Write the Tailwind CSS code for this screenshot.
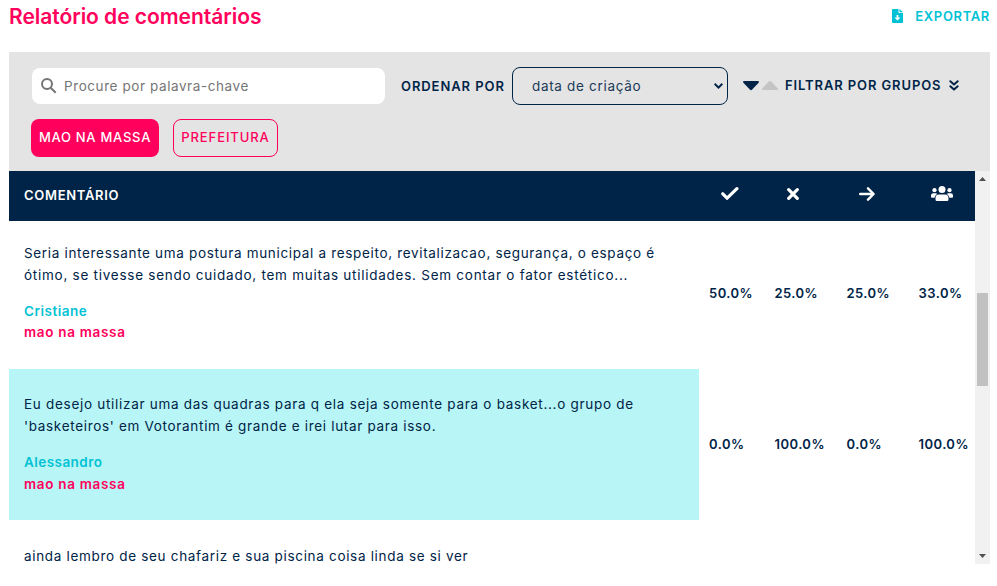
<!DOCTYPE html>
<html lang="pt-BR">
<head>
<meta charset="utf-8">
<title>Relatório de comentários</title>
<script src="https://cdn.jsdelivr.net/npm/@tailwindcss/browser@4"></script>
</head>
<body class="h-[586px] overflow-hidden bg-white pl-[9px] pr-[7px] font-['Inter','Liberation_Sans',sans-serif] text-[#002447]">
<header class="flex h-[52px] items-start justify-between">
  <h1 class="pt-[2px] text-[21px] leading-[30px] font-semibold tracking-[-0.04px] whitespace-nowrap text-[#ff005c]">Relatório de comentários</h1>
  <a class="flex items-center gap-[12px] pt-[5px] text-[13px] leading-[22px] font-semibold tracking-[0.65px] text-[#00c2d4]">
    <svg class="h-[14px] w-[11px]" viewBox="0 0 11 14" fill="currentColor"><path fill-rule="evenodd" d="M1 0h5.5v4H11v9.200a.8.8 0 0 1-.8.8H.8a.8.8 0 0 1-.8-.8V.8A.8.800 0 0 1 .8 0zM4.600 6v2.500H2.500l3 3 3-3H6.400V6z"/><path d="M7.500 0 11 3.200H7.500z"/></svg>
    <span class="whitespace-nowrap">EXPORTAR</span>
  </a>
</header>
<section class="h-[119px] bg-[#e4e4e4] pt-[15px] pl-[22px]">
  <div class="flex h-[38px] items-center">
    <label class="ml-px flex h-9 w-[353px] items-center rounded-[8px] bg-white pl-[9px]">
      <svg class="h-[16px] w-[16px] text-[#757575]" viewBox="0 0 16 16" fill="none" stroke="currentColor" stroke-width="2"><circle cx="6" cy="6" r="5"/><path d="m9.700 9.700 5 5"/></svg>
      <span class="ml-[7px] text-[13.500px] tracking-[0.58px] whitespace-nowrap text-[#757575]">Procure por palavra-chave</span>
    </label>
    <span class="ml-[16px] w-[111px] pt-px text-[13px] font-semibold tracking-[0.92px] whitespace-nowrap">ORDENAR POR</span>
    <div class="flex h-[38px] w-[216px] items-center justify-between rounded-[8px] border border-[#002447] pr-[4px] pl-[19px]">
      <span class="text-[13.500px] tracking-[0.68px] whitespace-nowrap text-[#1a3a59]">data de criação</span>
      <svg class="h-[6px] w-[9px]" viewBox="0 0 9 6" fill="none" stroke="currentColor" stroke-width="2"><path d="m.7.8 3.800 3.800L8.300.8"/></svg>
    </div>
    <svg class="ml-[15px] h-[10px] w-[16px]" viewBox="0 0 16 10" fill="currentColor"><path d="M1 0h14c1 0 1.200 1 .6 1.700L9.200 8.600c-.7.700-1.700.7-2.400 0L.4 1.700C-.2 1 0 0 1 0z"/></svg>
    <svg class="ml-[3px] mb-[3px] h-[10px] w-[16px] text-[#c4c4c4]" viewBox="0 0 16 10" fill="currentColor"><path d="M1 10h14c1 0 1.200-1 .6-1.700L9.200 1.400c-.7-.7-1.700-.7-2.400 0L.4 8.300C-.2 9 0 10 1 10z"/></svg>
    <span class="ml-[7px] w-[164px] text-[13px] font-semibold tracking-[0.89px] whitespace-nowrap">FILTRAR POR GRUPOS</span>
    <svg class="mb-[2px] h-[11px] w-[10px]" viewBox="0 0 10 11" fill="none" stroke="currentColor" stroke-width="2" stroke-linecap="round" stroke-linejoin="round"><path d="m1.300 1.200 3.700 3.300 3.700-3.300M1.300 6.300 5 9.600l3.700-3.300"/></svg>
  </div>
  <div class="mt-[14px] flex gap-[14px] text-[13px] font-medium">
    <div class="flex h-[38px] w-[128px] items-center justify-center rounded-[8px] bg-[#ff005c] tracking-[0.72px] whitespace-nowrap text-white">MAO NA MASSA</div>
    <div class="flex h-[38px] w-[105px] items-center justify-center rounded-[8px] border border-[#ff005c] tracking-[0.9px] whitespace-nowrap text-[#ff005c]">PREFEITURA</div>
  </div>
</section>
<main class="flex h-[393px]">
  <div class="w-[966px] overflow-hidden">
    <div class="grid h-[50px] grid-cols-[712px_65px_75px_1fr] items-center bg-[#002447] text-white">
      <span class="pl-[15px] text-[13px] font-semibold tracking-[0.7px]">COMENTÁRIO</span>
      <svg class="mb-[5px] h-[13px] w-[18px]" viewBox="0 0 18 13" fill="none" stroke="currentColor" stroke-width="3.200" stroke-linecap="round"><path d="m1.800 6.800 4.300 4.300 9.800-9.400"/></svg>
      <svg class="mb-[4px] ml-[1px] h-[12px] w-[12px]" viewBox="0 0 12 12" fill="none" stroke="currentColor" stroke-width="3.200" stroke-linecap="round"><path d="m1.700 1.700 8.600 8.600m0-8.600-8.600 8.600"/></svg>
      <div class="flex items-center">
        <svg class="mb-[4px] -ml-[2px] h-[14px] w-[16px]" viewBox="0 0 16 14" fill="none" stroke="currentColor" stroke-width="2.400" stroke-linecap="round" stroke-linejoin="round"><path d="M1.200 7h13M9 1.300 14.600 7 9 12.700"/></svg>
        <svg class="mb-[5px] ml-[56px] h-[15px] w-[22px]" viewBox="0 0 22 15" fill="currentColor"><circle cx="11" cy="3.600" r="3.500"/><circle cx="3.500" cy="4.200" r="2.100"/><circle cx="18.500" cy="4.200" r="2.100"/><path d="M8 8.500h6a3.500 3.500 0 0 1 3.500 3.500v1.500A1.500 1.500 0 0 1 16 15H6a1.500 1.500 0 0 1-1.500-1.500V12A3.500 3.500 0 0 1 8 8.500zM2.200 7.200h2.300c.8 0 1.400.3 1.800.7-1.700.9-2.600 2.300-2.700 3.900H1a1 1 0 0 1-1-1V9.500a2.300 2.300 0 0 1 2.200-2.300zM19.800 7.200h-2.300c-.8 0-1.400.3-1.800.7 1.700.9 2.600 2.300 2.700 3.900H21a1 1 0 0 0 1-1V9.500a2.300 2.300 0 0 0-2.200-2.300z"/></svg>
      </div>
    </div>
    <div class="grid h-[148px] grid-cols-[690px_1fr]">
      <div class="pt-[21px] pl-[15px] text-[13.500px] leading-[22px] whitespace-nowrap">
        <p class="tracking-[0.67px]">Seria interessante uma postura municipal a respeito, revitalizacao, segurança, o espaço é</p>
        <p class="tracking-[0.74px]">ótimo, se tivesse sendo cuidado, tem muitas utilidades. Sem contar o fator estético...</p>
        <p class="mt-[14px] font-semibold tracking-[0.5px] text-[#00c2d4]">Cristiane</p>
        <p class="-mt-px font-semibold tracking-[0.68px] text-[#ff005c]">mao na massa</p>
      </div>
      <div class="grid grid-cols-[65.500px_72px_72px_56px] items-center pb-[2px] pl-[10px] text-[13px] font-semibold tracking-[0.45px]"><span>50.0%</span><span>25.0%</span><span>25.0%</span><span>33.0%</span></div>
    </div>
    <div class="grid h-[151px] grid-cols-[690px_1fr]">
      <div class="bg-[#b8f5f6] pt-[24px] pl-[15px] text-[13.500px] leading-[22px] whitespace-nowrap">
        <p class="tracking-[0.71px]">Eu desejo utilizar uma das quadras para q ela seja somente para o basket...o grupo de</p>
        <p class="tracking-[0.68px]">'basketeiros' em Votorantim é grande e irei lutar para isso.</p>
        <p class="mt-[14px] font-semibold tracking-[0.45px] text-[#00c2d4]">Alessandro</p>
        <p class="font-semibold tracking-[0.68px] text-[#ff005c]">mao na massa</p>
      </div>
      <div class="grid grid-cols-[65.500px_72px_72px_56px] items-center pl-[10px] text-[13px] font-semibold tracking-[0.45px]"><span>0.0%</span><span>100.0%</span><span>0.0%</span><span>100.0%</span></div>
    </div>
    <div class="pt-[25px] pl-[15px] text-[13.500px] leading-[22px] whitespace-nowrap">
      <p class="tracking-[0.68px]">ainda lembro de seu chafariz e sua piscina coisa linda se si ver</p>
    </div>
  </div>
  <div class="flex w-[15px] flex-col items-center bg-[#f1f1f1]">
    <svg class="mt-[6px] h-[4px] w-[7px]" viewBox="0 0 7 4" fill="#505050"><path d="M0 4 3.500 0 7 4z"/></svg>
    <div class="mt-[112px] h-[93px] w-[11px] bg-[#c1c1c1]"></div>
    <svg class="mt-auto mb-[6px] h-[4px] w-[7px]" viewBox="0 0 7 4" fill="#505050"><path d="M0 0h7L3.500 4z"/></svg>
  </div>
</main>
</body>
</html>
